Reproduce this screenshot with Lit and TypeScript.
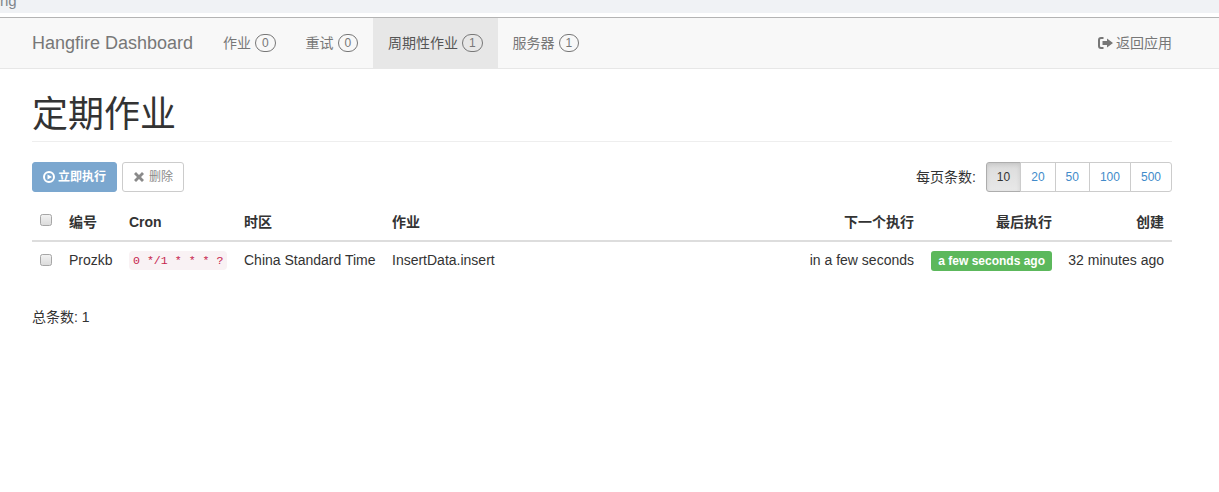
import { LitElement, html, css } from "lit";
import { customElement } from "lit/decorators.js";

@customElement("app-root")
export class AppRoot extends LitElement {
  static styles = css`
    :host { display: block; min-height: 492px; background: #fff; color: #333; font-family: "Liberation Sans", "Noto Sans CJK SC", sans-serif; font-size: 14px; line-height: 20px; }
    * { box-sizing: border-box; }
    .strip { height: 13px; background: #f0f2f5; overflow: hidden; color: #80868b; font-size: 15px; line-height: 14px; }
    .strip span { display: block; margin-top: -6px; }
    .gap { height: 4px; }
    .nav { height: 52px; background: #f8f8f8; border-top: 1px solid #b4b4b4; border-bottom: 1px solid #e7e7e7; padding: 0 47px 0 32px; display: flex; align-items: stretch; color: #777; }
    .brand { font-size: 18px; line-height: 50px; margin-right: 15px; }
    .item { padding: 0 15px; display: flex; align-items: center; gap: 4px; }
    .item.active { background: #e7e7e7; color: #555; }
    .count { display: inline-flex; align-items: center; justify-content: center; width: 20.5px; height: 18px; border: 1px solid #777; border-radius: 10px; font-size: 12px; line-height: 16px; color: #777; background: transparent; }
    .spacer { flex: 1; }
    .back { display: flex; align-items: center; gap: 3px; }
    .back svg { width: 15px; height: 14px; fill: #777; }
    .main { padding: 0 47px 0 32px; }
    h1 { margin: 20px 0 20px; padding: 3px 0 4px; height: 53px; border-bottom: 1px solid #eee; font-size: 36px; font-weight: 400; line-height: 45px; color: #333; }
    .toolbar { display: flex; align-items: center; height: 30px; font-size: 12px; line-height: 18px; }
    .btn { height: 30px; display: inline-flex; align-items: center; gap: 3px; padding: 0 10px; border-radius: 3px; border: 1px solid #ccc; background: #fff; font-size: 12px; font-weight: 700; }
    .run { background: #7ba7cf; border-color: #7ba7cf; color: #fff; margin-right: 5px; }
    .del { color: #8a8a8a; font-weight: 400; gap: 4px; }
    .btn svg { width: 12px; height: 12px; fill: currentColor; }
    .pager-label { margin-left: auto; margin-right: 10px; font-size: 14px; color: #333; }
    .pager { display: flex; height: 30px; }
    .page { padding: 0 10px; line-height: 28px; border: 1px solid #ccc; margin-left: -1px; color: #428bca; font-size: 12px; background: #fff; }
    .page:last-child { border-radius: 0 3px 3px 0; }
    .page.on { color: #333; background: linear-gradient(#dcdcdc, #e8e8e8); border-color: #adadad; border-radius: 3px 0 0 3px; margin-left: 0; box-shadow: inset 0 2px 4px rgba(0,0,0,.1); }
    table { width: 1140px; margin-top: 13px; border-collapse: collapse; table-layout: fixed; }
    th, td { padding: 8px; text-align: left; white-space: nowrap; }
    th { height: 36px; padding: 6px 8px 8px; font-weight: 700; font-size: 14px; border-bottom: 2px solid #ddd; color: #333; }
    td { height: 38px; padding: 7px 8px 9px; color: #333; }
    .r { text-align: right; }
    .check { display: block; width: 12px; height: 12px; border: 1px solid #a6a6a6; border-radius: 2.5px; background: linear-gradient(#f2f2f2, #dcdcdc); }
    th .check { position: relative; top: -2px; }
    code { font-family: "Liberation Mono", monospace; font-size: 11.6px; color: #c7254e; background: #f9f2f4; border-radius: 4px; padding: 3px 4px; }
    .label { display: inline-block; background: #5cb85c; color: #fff; font-size: 12px; font-weight: 700; line-height: 20px; height: 20px; padding: 0 7px; border-radius: 3px; vertical-align: middle; margin-top: 2px; }
    .total { margin-top: 27px; font-size: 14px; }
  `;

  render() {
    const nav: [string, number, boolean][] = [["作业", 0, false], ["重试", 0, false], ["周期性作业", 1, true], ["服务器", 1, false]];
    return html`
      <div class="strip"><span>ng</span></div>
      <div class="gap"></div>
      <div class="nav">
        <div class="brand">Hangfire Dashboard</div>
        ${nav.map(([t, n, a]) => html`<div class="item ${a ? "active" : ""}">${t}<span class="count">${n}</span></div>`)}
        <div class="spacer"></div>
        <div class="back">
          <svg viewBox="0 0 15 14"><path d="M5.500 1H3A3 3 0 0 0 0 4v6a3 3 0 0 0 3 3h2.500v-2H3a1 1 0 0 1-1-1V4a1 1 0 0 1 1-1h2.500zM9 2.500 15 7l-6 4.500V9H4.500V5H9z"/></svg>
          返回应用
        </div>
      </div>
      <div class="main">
        <h1>定期作业</h1>
        <div class="toolbar">
          <div class="btn run"><svg viewBox="0 0 12 12"><path fill-rule="evenodd" d="M6 0a6 6 0 1 1 0 12A6 6 0 0 1 6 0zm0 2a4 4 0 1 0 0 8 4 4 0 0 0 0-8zM4.500 3.500 9 6 4.500 8.500z"/></svg>立即执行</div>
          <div class="btn del"><svg viewBox="0 0 12 12"><path d="M3 1 6 4l3-3 2 2-3 3 3 3-2 2-3-3-3 3-2-2 3-3-3-3z"/></svg>删除</div>
          <span class="pager-label">每页条数:</span>
          <div class="pager">
            ${["10", "20", "50", "100", "500"].map((p, i) => html`<span class="page ${i === 0 ? "on" : ""}">${p}</span>`)}
          </div>
        </div>
        <table>
          <colgroup><col style="width:29px"/><col style="width:60px"/><col style="width:115px"/><col style="width:148px"/><col/><col style="width:140px"/><col style="width:138px"/><col style="width:112px"/></colgroup>
          <thead><tr>
            <th><span class="check"></span></th><th>编号</th><th>Cron</th><th>时区</th><th>作业</th><th class="r">下一个执行</th><th class="r">最后执行</th><th class="r">创建</th>
          </tr></thead>
          <tbody><tr>
            <td><span class="check"></span></td><td>Prozkb</td><td><code>0 */1 * * * ?</code></td><td>China Standard Time</td><td>InsertData.insert</td><td class="r">in a few seconds</td><td class="r"><span class="label">a few seconds ago</span></td><td class="r">32 minutes ago</td>
          </tr></tbody>
        </table>
        <div class="total">总条数: 1</div>
      </div>
    `;
  }
}
